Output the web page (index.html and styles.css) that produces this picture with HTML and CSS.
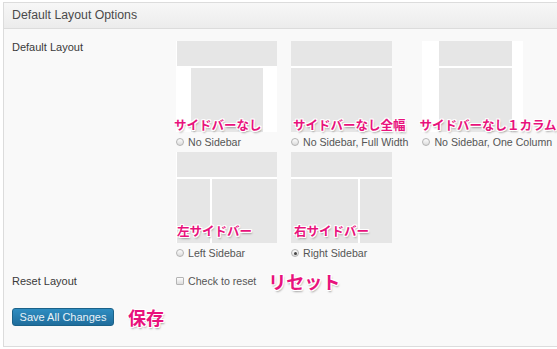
FILE: index.html
```html
<!DOCTYPE html>
<html>
<head>
<meta charset="utf-8">
<link rel="stylesheet" href="styles.css">
</head>
<body>
<div class="panel">
  <div class="panel-head">Default Layout Options</div>
  <div class="panel-body">
    <div class="row">
      <div class="row-label">Default Layout</div>
      <div class="layouts">
        <div class="layout">
          <svg class="thumb" width="101" height="91" viewBox="0 0 101 91"><rect width="101" height="91" fill="#fff"/><rect x="1" y="0" width="100" height="25" class="g"/><rect x="15" y="27" width="72" height="64" class="g"/></svg>
          <label class="opt"><input type="radio" name="layout"> No Sidebar</label>
          <span class="note n1">サイドバーなし</span>
        </div>
        <div class="layout">
          <svg class="thumb" width="101" height="91" viewBox="0 0 101 91"><rect width="101" height="91" fill="#fff"/><rect x="0" y="0" width="101" height="25" class="g"/><rect x="0" y="27" width="101" height="64" class="g"/></svg>
          <label class="opt"><input type="radio" name="layout"> No Sidebar, Full Width</label>
          <span class="note n2">サイドバーなし全幅</span>
        </div>
        <div class="layout">
          <svg class="thumb" width="101" height="91" viewBox="0 0 101 91"><rect width="101" height="91" fill="#fff"/><rect x="17" y="0" width="73" height="25" class="g"/><rect x="17" y="27" width="73" height="64" class="g"/></svg>
          <label class="opt"><input type="radio" name="layout"> No Sidebar, One Column</label>
          <span class="note n3">サイドバーなし１カラム</span>
        </div>
        <div class="layout">
          <svg class="thumb" width="101" height="91" viewBox="0 0 101 91"><rect width="101" height="91" fill="#fff"/><rect x="1" y="0" width="100" height="25" class="g"/><rect x="1" y="27" width="33" height="64" class="g"/><rect x="36" y="27" width="65" height="64" class="g"/></svg>
          <label class="opt"><input type="radio" name="layout"> Left Sidebar</label>
          <span class="note n4">左サイドバー</span>
        </div>
        <div class="layout">
          <svg class="thumb" width="101" height="91" viewBox="0 0 101 91"><rect width="101" height="91" fill="#fff"/><rect x="0" y="0" width="101" height="25" class="g"/><rect x="0" y="27" width="67" height="64" class="g"/><rect x="69" y="27" width="32" height="64" class="g"/></svg>
          <label class="opt"><input type="radio" name="layout" checked> Right Sidebar</label>
          <span class="note n5">右サイドバー</span>
        </div>
      </div>
    </div>
    <div class="row reset-row">
      <div class="row-label">Reset Layout</div>
      <div class="reset">
        <label class="opt"><input type="checkbox"> Check to reset</label>
        <span class="note big">リセット</span>
      </div>
    </div>
    <div class="actions">
      <button class="btn" type="button">Save All Changes</button>
      <span class="note big">保存</span>
    </div>
  </div>
</div>
</body>
</html>
```
FILE: styles.css
```css
html, body { margin: 0; padding: 0; background: #fff; overflow: hidden; }
body {
  font-family: "Liberation Sans", Arial, sans-serif;
  font-size: 11px;
  color: #333;
  width: 557px;
  height: 349px;
}
.panel {
  margin: 2px 0 0 3px;
  width: 570px;
  border: 1px solid #dcdcdc;
  background: #f9f9f9;
  box-sizing: border-box;
  height: 345px;
}
.panel-head {
  height: 25px;
  line-height: 25px;
  padding-left: 8px;
  font-size: 12.3px;
  color: #4a4a4a;
  background: linear-gradient(#f7f7f7, #ececec);
  border-bottom: 1px solid #dcdcdc;
}
.panel-body { padding: 11px 0 0 8px; }
.row { display: grid; grid-template-columns: 164px 1fr; }
.row-label { line-height: 15px; color: #3a3a3a; }
.layouts { display: flex; flex-wrap: wrap; column-gap: 14px; padding-top: 1px; }
.layout { position: relative; display: flex; flex-direction: column; min-width: 101px; }
.thumb { display: block; }
.thumb .g { fill: #e6e6e6; }
.opt {
  display: flex; align-items: center; gap: 4px;
  height: 16px; margin: 2px 0 2px; color: #555; white-space: nowrap;
  font-size: 10.6px;
}
.opt input {
  appearance: none; -webkit-appearance: none;
  margin: 0; width: 8px; height: 8px;
  border: 1px solid #b4b4b4; border-radius: 50%;
  background: linear-gradient(#fdfdfd, #dcdcdc);
  box-sizing: border-box;
  position: relative;
}
.opt input:checked::after {
  content: ""; position: absolute; left: 1.5px; top: 1.5px;
  width: 3px; height: 3px; border-radius: 50%; background: #444;
}
.opt input[type=checkbox] { border-radius: 1px; }
.note {
  position: absolute;
  font-family: "Noto Sans CJK JP", sans-serif;
  font-weight: 700;
  font-size: 12.5px;
  line-height: 14px;
  color: #e8127c;
  white-space: nowrap;
  text-shadow: -1px -1px 0 #fff, 1px -1px 0 #fff, -1px 1px 0 #fff, 1px 1px 0 #fff,
    0 -1px 0 #fff, 0 1px 0 #fff, -1px 0 0 #fff, 1px 0 0 #fff, 1px 2px 2px rgba(0,0,0,.35);
}
.n1 { left: -2px; top: 77px; }
.n2 { left: 2px; top: 77px; }
.n3 { left: -3px; top: 77px; }
.n4 { left: 1px; top: 72px; }
.n5 { left: 3px; top: 72px; }
.reset-row { margin-top: 8px; align-items: center; }
.reset { display: flex; align-items: center; gap: 12px; }
.reset .note, .actions .note { position: static; font-size: 18px; line-height: 20px; }
.reset .opt { margin: 0; }
.actions { display: flex; align-items: center; gap: 14px; margin-top: 16px; }
.btn {
  font-family: "Liberation Sans", Arial, sans-serif;
  font-size: 11px;
  color: #e8f2f8;
  width: 102px; height: 18px; padding: 0;
  border: 1px solid #1b6289; border-radius: 3px;
  background: linear-gradient(#2f8dc1, #1f6d9c);
}
```
